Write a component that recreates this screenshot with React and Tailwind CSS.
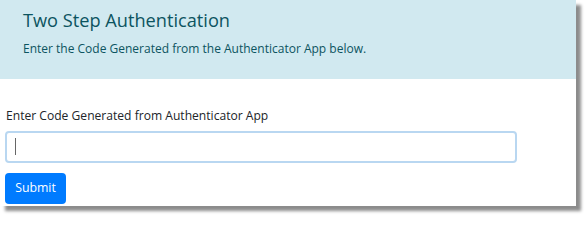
export default function App() {
    return (
        <div className="w-[586px] h-[217px] bg-white font-['Open_Sans',sans-serif]">
            <div className="w-[576px] h-[206px] bg-white shadow-[5px_5px_3px_rgba(0,0,0,0.45)] flex flex-col">
                <header className="h-[79px] bg-[#d1e9f0] pl-[23px] pt-[7px] text-[#0c5460]">
                    <h3 className="text-[18.2px] leading-[26px]">Two Step Authentication</h3>
                    <p className="text-[12px] leading-[20px] mt-[6px]">Enter the Code Generated from the Authenticator App below.</p>
                </header>
                <form className="px-[5px] pt-[28px] flex flex-col">
                    <label className="text-[12.1px] leading-[18px] text-[#212529] pl-px">Enter Code Generated from Authenticator App</label>
                    <div className="relative mt-[6px] w-[512px]">
                        <input
                            type="text"
                            className="w-full h-[32px] rounded-[4px] border-2 border-[#b9d7f1] outline-none px-[9px] text-sm"
                        />
                        <span className="absolute left-[10px] top-[7px] w-px h-[17px] bg-[#666]"></span>
                    </div>
                    <button
                        type="button"
                        className="mt-[10px] w-[61px] h-[31px] rounded-[4px] bg-[#007bff] text-white text-[12.3px]"
                    >
                        Submit
                    </button>
                </form>
            </div>
        </div>
    )
}
